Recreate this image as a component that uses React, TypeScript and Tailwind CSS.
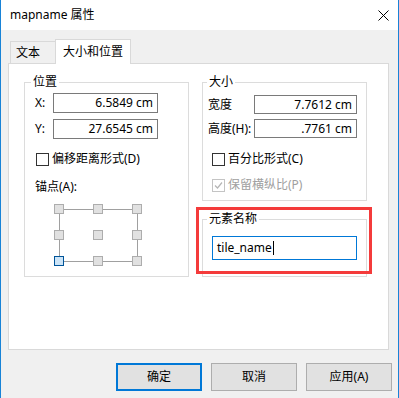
const ui = "font-['Noto_Sans','Noto_Sans_CJK_SC',sans-serif]";

function Checkbox({ label, checked, disabled }: { label: string; checked?: boolean; disabled?: boolean }) {
  return (
    <div className={`flex h-[16px] items-center ${disabled ? 'text-[#a0a0a0]' : 'text-black'}`}>
      <span
        className={`flex h-[13px] w-[13px] items-center justify-center border bg-white ${
          disabled ? 'border-[#c4c4c4]' : 'border-[#333333]'
        }`}
      >
        {checked && (
          <svg width="9" height="9" viewBox="0 0 9 9">
            <path d="M1 4.5 L3.5 7 L8 1.5" fill="none" stroke="#b5b5b5" strokeWidth="1.2" />
          </svg>
        )}
      </span>
      <span className="ml-[3px] leading-[16px]">{label}</span>
    </div>
  );
}

function Field({ value, width, height }: { value: string; width: string; height: string }) {
  return (
    <div className={`${width} ${height} flex items-center justify-end border border-[#7a7a7a] bg-white pr-[4px] leading-none`}>
      {value}
    </div>
  );
}

// anchor picker: 3x3 squares, bottom-left selected
function AnchorGrid() {
  const xs = [0, 39, 78];
  const ys = [0, 26, 52];
  return (
    <svg width="90" height="64" viewBox="0 0 90 64">
      <g stroke="#a0a0a0" strokeWidth="1">
        <line x1="10" y1="5.5" x2="39" y2="5.5" />
        <line x1="49" y1="5.5" x2="78" y2="5.5" />
        <line x1="10" y1="57.5" x2="39" y2="57.5" />
        <line x1="49" y1="57.5" x2="78" y2="57.5" />
        <line x1="5.5" y1="10" x2="5.5" y2="26" />
        <line x1="5.5" y1="36" x2="5.5" y2="52" />
        <line x1="83.5" y1="10" x2="83.5" y2="26" />
        <line x1="83.5" y1="36" x2="83.5" y2="52" />
      </g>
      {ys.map((y) =>
        xs.map((x) => {
          const sel = x === 0 && y === 52;
          return (
            <rect
              key={`${x}-${y}`}
              x={x + 0.5}
              y={y + 0.5}
              width="9"
              height="9"
              fill={sel ? '#cce4f7' : '#e1e1e1'}
              stroke={sel ? '#005499' : '#adadad'}
            />
          );
        })
      )}
    </svg>
  );
}

export default function App() {
  return (
    <div
      className={`${ui} flex h-[398px] w-[399px] flex-col border-x border-[#1883d7] bg-[#f0f0f0] text-[12px] text-black`}
    >
      {/* Title bar */}
      <div className="flex h-[30px] items-center justify-between bg-white pl-[9px] pr-[9px]">
        <span className="text-[12px] leading-[16px]">mapname 属性</span>
        <svg width="11" height="11" viewBox="0 0 11 11">
          <path d="M0.5 0.5 L10.5 10.5 M10.5 0.5 L0.5 10.5" stroke="#000" strokeWidth="1" />
        </svg>
      </div>

      {/* Tabs */}
      <div className="ml-[7px] mt-[9px] flex h-[24px] items-end">
        <div className="ml-[2px] flex h-[22px] w-[46px] items-center border-x border-t border-[#d9d9d9] pl-[5px] leading-[16px]">
          文本
        </div>
        <div className="relative z-10 -mb-px -ml-px flex h-[25px] w-[76px] items-center justify-center border-x border-t border-[#d9d9d9] bg-white leading-[16px]">
          大小和位置
        </div>
      </div>

      {/* Tab panel */}
      <div className="ml-[7px] flex h-[287px] w-[381px] border border-[#d9d9d9] bg-white pl-[15px] pt-[10px]">
        {/* 位置 */}
        <fieldset className="h-[203px] w-[165px] border border-[#dcdcdc]">
          <legend className="ml-[6px] px-[2px] leading-[16px]">位置</legend>
          <div className="mt-[3px] flex items-center pl-[10px]">
            <span className="w-[18px]">X:</span>
            <Field value="6.5849 cm" width="w-[105px]" height="h-[20px]" />
          </div>
          <div className="mt-[6px] flex items-center pl-[10px]">
            <span className="w-[18px]">Y:</span>
            <Field value="27.6545 cm" width="w-[105px]" height="h-[20px]" />
          </div>
          <div className="mt-[12px] pl-[11px]">
            <Checkbox label="偏移距离形式(D)" />
          </div>
          <div className="mt-[12px] pl-[10px] leading-[16px]">锚点(A):</div>
          <div className="ml-[29px] mt-[9px]">
            <AnchorGrid />
          </div>
        </fieldset>

        <div className="relative ml-[13px] flex w-[165px] flex-col">
          {/* 大小 */}
          <fieldset className="h-[127px] border border-[#dcdcdc]">
            <legend className="ml-[4px] px-[2px] leading-[16px]">大小</legend>
            <div className="mt-[5px] flex items-center pl-[5px]">
              <span className="w-[46px]">宽度</span>
              <Field value="7.7612 cm" width="w-[103px]" height="h-[19px]" />
            </div>
            <div className="mt-[5px] flex items-center pl-[5px]">
              <span className="w-[46px]">高度(H):</span>
              <Field value=".7761 cm" width="w-[103px]" height="h-[19px]" />
            </div>
            <div className="mt-[13px] pl-[9px]">
              <Checkbox label="百分比形式(C)" />
            </div>
            <div className="mt-[10px] pl-[9px]">
              <Checkbox label="保留横纵比(P)" checked disabled />
            </div>
          </fieldset>

          {/* 元素名称 */}
          <fieldset className="mt-[10px] h-[66px] border border-[#dcdcdc]">
            <legend className="ml-[4px] px-[2px] leading-[16px]">元素名称</legend>
            <div className="ml-[9px] mt-[9px] flex h-[24px] w-[145px] items-center border border-[#0078d7] bg-white pl-[4px] leading-none">
              tile_name
              <span className="ml-px h-[14px] w-px bg-black" />
            </div>
          </fieldset>

          {/* annotation frame */}
          <div className="pointer-events-none absolute left-[-6px] top-[133px] h-[67px] w-[176px] border-[3px] border-[#f43b3b]" />
        </div>
      </div>

      {/* Buttons */}
      <div className="mt-[13px] flex justify-end gap-[9px] pr-[6px]">
        <button className="flex h-[28px] w-[86px] items-center justify-center border-2 border-[#0078d7] bg-[#e1e1e1] leading-none">
          确定
        </button>
        <button className="flex h-[28px] w-[86px] items-center justify-center border border-[#adadad] bg-[#e1e1e1] leading-none">
          取消
        </button>
        <button className="flex h-[28px] w-[86px] items-center justify-center border border-[#adadad] bg-[#e1e1e1] leading-none">
          应用(A)
        </button>
      </div>
    </div>
  );
}
